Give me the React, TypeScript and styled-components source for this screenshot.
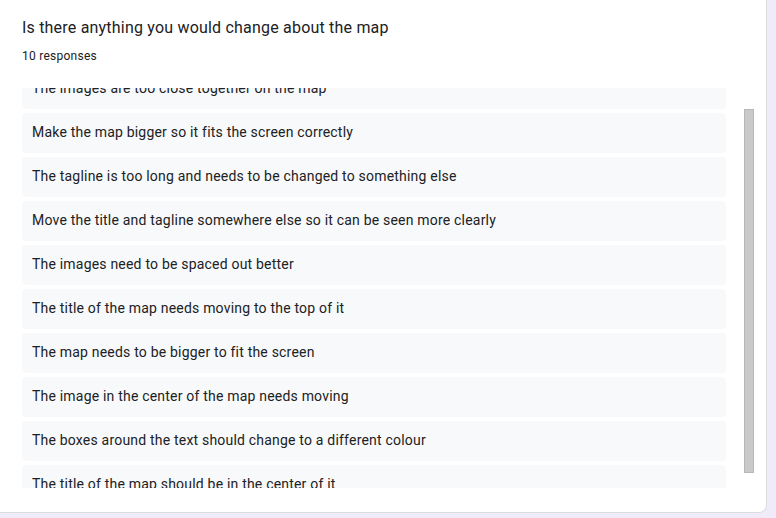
import { useEffect, useRef, useState } from "react";
import styled, { createGlobalStyle } from "styled-components";

const GlobalStyle = createGlobalStyle`
  html, body {
    margin: 0;
    padding: 0;
    background: #f0ebf8;
    font-family: Roboto, "Liberation Sans", Arial, sans-serif;
  }
`;

const Page = styled.div`
  width: 776px;
  height: 518px;
  box-sizing: border-box;
  padding: 0 9px 5px 0;
  overflow: hidden;
`;

const Card = styled.section`
  height: 100%;
  box-sizing: border-box;
  background: #ffffff;
  border-right: 1px solid #dadce0;
  border-bottom: 1px solid #dadce0;
  border-radius: 0 0 8px 0;
  padding: 16px 12px 0 22px;
  display: flex;
  flex-direction: column;
`;

const Title = styled.h2`
  margin: 0;
  font-size: 16px;
  font-weight: 400;
  line-height: 24px;
  letter-spacing: 0.2px;
  color: #202124;
`;

const Count = styled.div`
  margin-top: 8px;
  font-size: 12px;
  line-height: 16px;
  letter-spacing: 0.25px;
  color: #202124;
`;

const Scroller = styled.div`
  margin-top: 24px;
  height: 400px;
  display: flex;
`;

const List = styled.div`
  flex: 1;
  overflow-y: auto;
  display: flex;
  flex-direction: column;
  gap: 4px;
  padding-top: 4px;
  box-sizing: border-box;
  scrollbar-width: none;

  &::-webkit-scrollbar {
    display: none;
  }
`;

const Track = styled.div`
  position: relative;
  width: 10px;
  flex: 0 0 10px;
`;

const Thumb = styled.div`
  position: absolute;
  left: 0;
  right: 0;
  box-sizing: border-box;
  background: #c9c9c9;
  border: 1px solid #b8b8b8;
`;

const Item = styled.div`
  flex: 0 0 40px;
  box-sizing: border-box;
  display: flex;
  align-items: center;
  margin-right: 18px;
  padding: 0 10px 2px;
  background: #f8f9fa;
  border-radius: 4px;
  font-size: 14px;
  letter-spacing: 0.2px;
  color: #202124;
  white-space: nowrap;
`;

const responses = [
  "The images are too close together on the map",
  "Make the map bigger so it fits the screen correctly",
  "The tagline is too long and needs to be changed to something else",
  "Move the title and tagline somewhere else so it can be seen more clearly",
  "The images need to be spaced out better",
  "The title of the map needs moving to the top of it",
  "The map needs to be bigger to fit the screen",
  "The image in the center of the map needs moving",
  "The boxes around the text should change to a different colour",
  "The title of the map should be in the center of it",
];

export default function App() {
  const listRef = useRef<HTMLDivElement>(null);
  const [thumb, setThumb] = useState({ top: 21, height: 362 });

  useEffect(() => {
    const el = listRef.current;
    if (!el) return;
    el.scrollTop = 23;
    const update = () => {
      const ratio = el.clientHeight / el.scrollHeight;
      setThumb({ top: el.scrollTop * ratio, height: el.clientHeight * ratio });
    };
    update();
    el.addEventListener("scroll", update);
    return () => el.removeEventListener("scroll", update);
  }, []);

  return (
    <>
      <GlobalStyle />
      <Page>
        <Card>
          <Title>Is there anything you would change about the map</Title>
          <Count>10 responses</Count>
          <Scroller>
            <List ref={listRef}>
              {responses.map((text, i) => (
                <Item key={i}>{text}</Item>
              ))}
            </List>
            <Track>
              <Thumb style={{ top: thumb.top, height: thumb.height }} />
            </Track>
          </Scroller>
        </Card>
      </Page>
    </>
  );
}
